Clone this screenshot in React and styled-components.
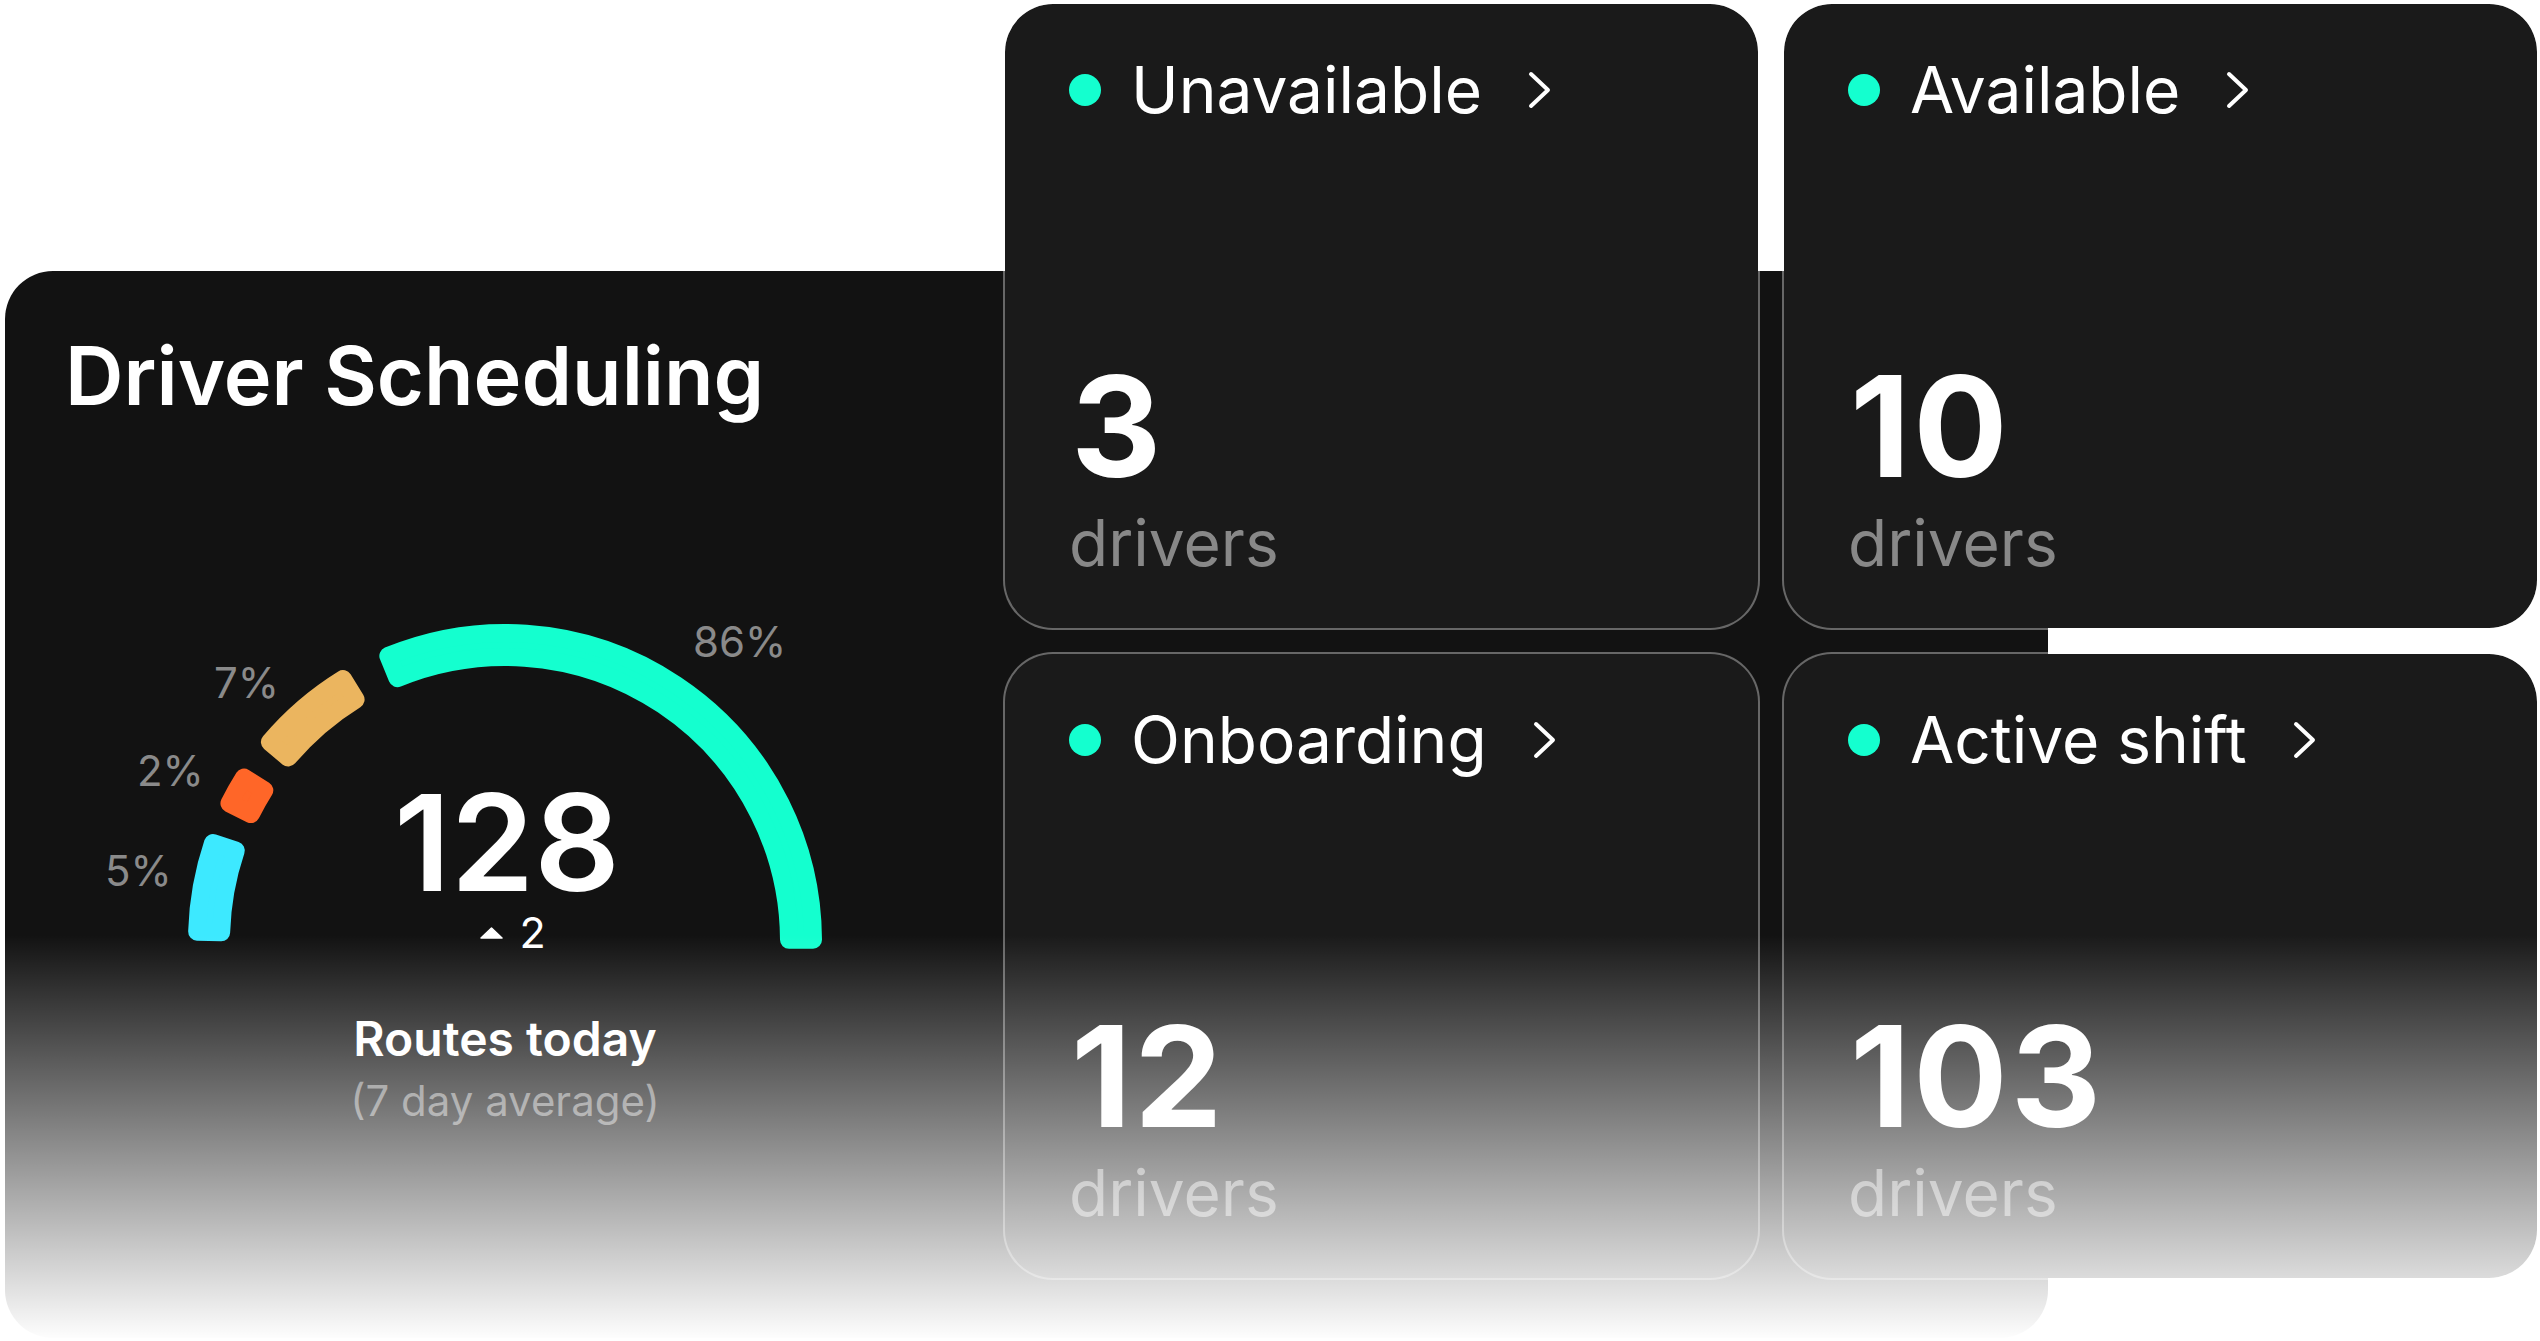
import React from "react";
import styled, { createGlobalStyle } from "styled-components";

const GlobalStyle = createGlobalStyle`
  html, body {
    margin: 0;
    padding: 0;
    background: #ffffff;
  }
  body {
    font-family: Inter, "Noto Sans", "Liberation Sans", sans-serif;
    overflow: hidden;
  }
`;

const Stage = styled.div`
  width: 2540px;
  height: 1341px;
  display: grid;
  grid-template-columns: 1fr;
  grid-template-rows: 1fr;
  overflow: hidden;

  & > * {
    grid-area: 1 / 1;
  }
`;

const Panel = styled.section`
  align-self: start;
  justify-self: start;
  margin: 271px 0 0 5px;
  width: 2043px;
  height: 1067px;
  box-sizing: border-box;
  padding-top: 65px;
  background: #121212;
  border-radius: 48px;
  display: flex;
  flex-direction: column;
`;

const Title = styled.h1`
  margin: 0 0 0 60px;
  font-size: 81px;
  line-height: 1;
  font-weight: 600;
  color: #ffffff;
`;

const GaugeSection = styled.div`
  width: 1000px;
  margin-top: 183px;
  display: flex;
  flex-direction: column;
  align-items: center;
`;

const GaugeChart = styled.div`
  width: 1000px;
  height: 356px;
  display: grid;

  & > * {
    grid-area: 1 / 1;
  }
`;

const ValueStack = styled.div`
  align-self: end;
  justify-self: center;
  margin-bottom: 2px;
  display: flex;
  flex-direction: column;
  align-items: center;
  gap: 2px;
`;

const BigValue = styled.div`
  font-size: 134px;
  line-height: 1;
  font-weight: 600;
  color: #ffffff;
  margin-left: 4px;
`;

const Delta = styled.div`
  display: flex;
  align-items: center;
  gap: 16px;
  margin-left: 16px;
  font-size: 43px;
  line-height: 1;
  font-weight: 400;
  color: #ffffff;
`;

const Caption = styled.div`
  margin-top: 59px;
  font-size: 48px;
  line-height: 1;
  font-weight: 600;
  color: #ffffff;
`;

const SubCaption = styled.div`
  margin-top: 17px;
  font-size: 42px;
  line-height: 1;
  font-weight: 400;
  color: #7e7e7e;
`;

const TileGrid = styled.div`
  align-self: start;
  justify-self: start;
  margin: 2px 0 0 1003px;
  display: grid;
  grid-template-columns: 757px 757px;
  grid-template-rows: 628px 628px;
  gap: 22px;
`;

const Tile = styled.div`
  box-sizing: border-box;
  border: 2px solid rgba(255, 255, 255, 0.36);
  background: #1a1a1a;
  background-clip: padding-box;
  border-radius: 50px;
  padding: 54px 64px 53px 64px;
  display: flex;
  flex-direction: column;
  justify-content: space-between;
`;

const TileHead = styled.div`
  display: flex;
  align-items: center;
  height: 64px;
`;

const Dot = styled.span`
  width: 32px;
  height: 32px;
  border-radius: 50%;
  background: ${props => props.color};
  margin-right: 30px;
  flex-shrink: 0;
`;

const TileLabel = styled.span`
  font-size: 64px;
  line-height: 1;
  font-weight: 400;
  color: #ffffff;
`;

const Chevron = styled.svg`
  margin-left: 46px;
  width: 24px;
  height: 38px;
`;

const TileBottom = styled.div`
  display: flex;
  flex-direction: column;
  gap: 15px;
`;

const TileNumber = styled.div`
  font-size: 140px;
  line-height: 1;
  font-weight: 700;
  color: #ffffff;
  letter-spacing: 3px;
  margin-left: 2px;
`;

const TileUnit = styled.div`
  font-size: 64px;
  line-height: 1;
  font-weight: 400;
  color: #888888;
`;

const Fade = styled.div`
  align-self: start;
  margin-top: 935px;
  height: 406px;
  background: linear-gradient(to bottom, rgba(255, 255, 255, 0) 0%, #ffffff 100%);
  pointer-events: none;
`;

const CX = 500;
const CY = 341;
const R_IN = 275;
const R_OUT = 317;
const CORNER = 9;

const segments = [
  { from: 0, to: 20.3, color: "#3DE9FF" },
  { from: 24.8, to: 33.8, color: "#FF6628" },
  { from: 38.5, to: 60, color: "#EBB55F" },
  { from: 66, to: 181.5, color: "#14FFCF" }
];

const percentLabels = [
  { text: "86%", x: 688, y: 57 },
  { text: "7%", x: 209, y: 98 },
  { text: "2%", x: 132, y: 186 },
  { text: "5%", x: 100, y: 286 }
];

// angle measured in degrees from the left end of the gauge, clockwise over the top
const point = (r, deg) => {
  const a = (deg * Math.PI) / 180;
  return `${(CX - r * Math.cos(a)).toFixed(2)} ${(CY - r * Math.sin(a)).toFixed(2)}`;
};

const sectorPath = (from, to) => {
  const mid = (R_IN + R_OUT) / 2;
  const shrink = ((CORNER / mid) * 180) / Math.PI;
  const a1 = from + shrink;
  const a2 = to - shrink;
  const ro = R_OUT - CORNER;
  const ri = R_IN + CORNER;
  const large = a2 - a1 > 180 ? 1 : 0;
  return [
    `M ${point(ro, a1)}`,
    `A ${ro} ${ro} 0 ${large} 1 ${point(ro, a2)}`,
    `L ${point(ri, a2)}`,
    `A ${ri} ${ri} 0 ${large} 0 ${point(ri, a1)}`,
    "Z"
  ].join(" ");
};

const Gauge = () => (
  <svg width="1000" height="356" viewBox="0 0 1000 356">
    {segments.map(s => (
      <path
        key={s.color}
        d={sectorPath(s.from, s.to)}
        fill={s.color}
        stroke={s.color}
        strokeWidth={CORNER * 2}
        strokeLinejoin="round"
      />
    ))}
    {percentLabels.map(l => (
      <text
        key={l.text}
        x={l.x}
        y={l.y}
        fill="#8a8a8a"
        fontSize="42"
        fontFamily="Inter, 'Liberation Sans', sans-serif"
        fontWeight="400"
      >
        {l.text}
      </text>
    ))}
  </svg>
);

const UpTriangle = () => (
  <svg width="23" height="12" viewBox="0 0 23 12">
    <path d="M11.5 1 L22 11 L1 11 Z" fill="#ffffff" stroke="#ffffff" strokeWidth="1.5" strokeLinejoin="round" />
  </svg>
);

const tiles = [
  { label: "Unavailable", value: "3" },
  { label: "Available", value: "10" },
  { label: "Onboarding", value: "12" },
  { label: "Active shift", value: "103" }
];

const StatusTile = ({ label, value }) => (
  <Tile>
    <TileHead>
      <Dot color="#14FFCF" />
      <TileLabel>{label}</TileLabel>
      <Chevron viewBox="0 0 24 38">
        <polyline
          points="3,3 20,19 3,35"
          fill="none"
          stroke="#ffffff"
          strokeWidth="4"
          strokeLinecap="round"
          strokeLinejoin="round"
        />
      </Chevron>
    </TileHead>
    <TileBottom>
      <TileNumber>{value}</TileNumber>
      <TileUnit>drivers</TileUnit>
    </TileBottom>
  </Tile>
);

const App = () => (
  <>
    <GlobalStyle />
    <Stage>
      <Panel>
        <Title>Driver Scheduling</Title>
        <GaugeSection>
          <GaugeChart>
            <Gauge />
            <ValueStack>
              <BigValue>128</BigValue>
              <Delta>
                <UpTriangle />
                <span>2</span>
              </Delta>
            </ValueStack>
          </GaugeChart>
          <Caption>Routes today</Caption>
          <SubCaption>(7 day average)</SubCaption>
        </GaugeSection>
      </Panel>
      <TileGrid>
        {tiles.map(t => (
          <StatusTile key={t.label} label={t.label} value={t.value} />
        ))}
      </TileGrid>
      <Fade />
    </Stage>
  </>
);

export default App;
